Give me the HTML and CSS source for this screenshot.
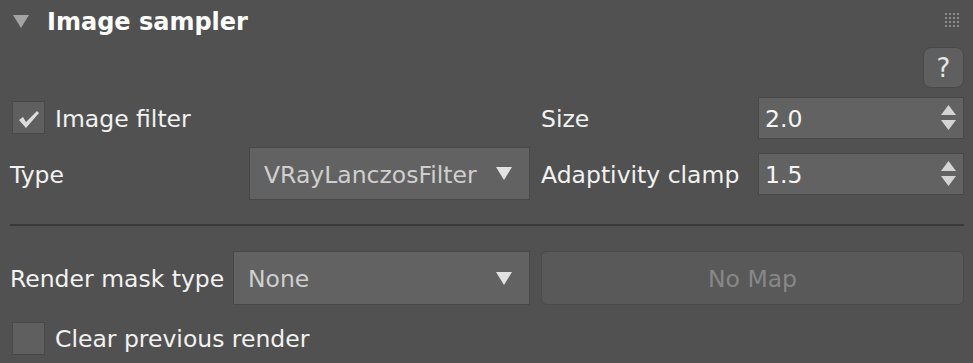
FILE: index.html
```html
<!DOCTYPE html>
<html lang="en">
<head>
    <meta charset="UTF-8">
    <title>Image sampler</title>
    <link rel="stylesheet" href="styles.css">
</head>
<body>
    <div class="rollout">
        <div class="rollout-head">
            <svg class="caret" width="16" height="13" viewBox="0 0 16 13"><polygon points="0,0 16,0 8,13" fill="#a3a3a3"/></svg>
            <span class="title">Image sampler</span>
            <svg class="grip" width="14" height="15" viewBox="0 0 14 15">
                <g fill="#8c8c8c">
                    <rect x="0" y="0" width="2" height="2"/><rect x="4" y="0" width="2" height="2"/><rect x="8" y="0" width="2" height="2"/><rect x="12" y="0" width="2" height="2"/>
                    <rect x="0" y="4" width="2" height="2"/><rect x="4" y="4" width="2" height="2"/><rect x="8" y="4" width="2" height="2"/><rect x="12" y="4" width="2" height="2"/>
                    <rect x="0" y="8" width="2" height="2"/><rect x="4" y="8" width="2" height="2"/><rect x="8" y="8" width="2" height="2"/><rect x="12" y="8" width="2" height="2"/>
                    <rect x="0" y="12" width="2" height="2"/><rect x="4" y="12" width="2" height="2"/><rect x="8" y="12" width="2" height="2"/><rect x="12" y="12" width="2" height="2"/>
                </g>
            </svg>
        </div>

        <div class="help-row">
            <button class="help">?</button>
        </div>

        <div class="row row-filter">
            <div class="half left">
                <span class="checkbox">
                    <svg width="22" height="20" viewBox="0 0 22 20"><path d="M1 11 L5 8 L8 13 L19 2 L21 4 L8 19 Z" fill="#dcdcdc"/></svg>
                </span>
                <span class="label check-label">Image filter</span>
            </div>
            <div class="half right">
                <span class="label">Size</span>
                <div class="spinner">
                    <span class="value">2.0</span>
                    <span class="arrows">
                        <svg width="15" height="25" viewBox="0 0 15 25"><polygon points="7.5,0 15,10 0,10" fill="#d4d4d4"/><polygon points="0,15 15,15 7.5,25" fill="#d4d4d4"/></svg>
                    </span>
                </div>
            </div>
        </div>

        <div class="row row-type">
            <div class="half left">
                <span class="label">Type</span>
                <div class="dropdown type-drop">
                    <span class="value">VRayLanczosFilter</span>
                    <svg width="16" height="13" viewBox="0 0 16 13"><polygon points="0,0 16,0 8,13" fill="#e2e2e2"/></svg>
                </div>
            </div>
            <div class="half right">
                <span class="label">Adaptivity clamp</span>
                <div class="spinner">
                    <span class="value">1.5</span>
                    <span class="arrows">
                        <svg width="15" height="25" viewBox="0 0 15 25"><polygon points="7.5,0 15,10 0,10" fill="#d4d4d4"/><polygon points="0,15 15,15 7.5,25" fill="#d4d4d4"/></svg>
                    </span>
                </div>
            </div>
        </div>

        <div class="separator"></div>

        <div class="row row-mask">
            <div class="half left">
                <span class="label">Render mask type</span>
                <div class="dropdown mask-drop">
                    <span class="value">None</span>
                    <svg width="16" height="13" viewBox="0 0 16 13"><polygon points="0,0 16,0 8,13" fill="#e2e2e2"/></svg>
                </div>
            </div>
            <div class="half right">
                <button class="map-btn">No Map</button>
            </div>
        </div>

        <div class="row row-clear">
            <div class="half left">
                <span class="checkbox"></span>
                <span class="label check-label">Clear previous render</span>
            </div>
        </div>
    </div>
</body>
</html>
```

FILE: styles.css
```css
body {
    margin: 0;
    background-color: #515151;
    color: #f2f2f2;
    font-family: "DejaVu Sans", Tahoma, sans-serif;
    font-size: 23.5px;
}

.rollout {
    padding: 0 9px 0 10px;
}

.rollout-head {
    display: flex;
    align-items: center;
    height: 45px;
}

.caret {
    margin-left: 3px;
    margin-top: -2px;
}

.title {
    font-weight: bold;
    font-size: 24px;
    margin-left: 18px;
    margin-top: -1px;
    color: #ffffff;
}

.grip {
    margin-left: auto;
    margin-right: 5px;
    margin-top: -4px;
}

.help-row {
    display: flex;
    justify-content: flex-end;
    margin-top: 2px;
}

.help {
    width: 41px;
    height: 41px;
    border: 1px solid #484848;
    border-radius: 8px;
    background-color: #5f5f5f;
    color: #e6e6e6;
    font-family: "DejaVu Sans", sans-serif;
    font-size: 26px;
    padding: 0;
}

.row {
    display: flex;
    column-gap: 11px;
}

.half {
    display: flex;
    align-items: center;
}

.half.left {
    width: 520px;
}

.half.right {
    width: 423px;
}

.row-filter {
    margin-top: 9px;
    height: 41px;
}

.row-type {
    margin-top: 9px;
    height: 53px;
}

.row-mask {
    margin-top: 25px;
    height: 54px;
}

.row-clear {
    margin-top: 15px;
    height: 36px;
}

.checkbox {
    box-sizing: border-box;
    width: 33px;
    height: 33px;
    margin-left: 2px;
    border: 1px solid #474747;
    background-color: #5f5f5f;
    display: flex;
    align-items: center;
    justify-content: center;
}

.checkbox svg {
    margin-top: 2px;
}

.check-label {
    margin-left: 10px;
}

.label {
    white-space: nowrap;
    padding-top: 2px;
}

.spinner,
.dropdown {
    box-sizing: border-box;
    display: flex;
    align-items: center;
    background-color: #626262;
    border: 1px solid #484848;
}

.spinner {
    margin-left: auto;
    width: 206px;
    height: 42px;
    padding: 0 7px 0 6px;
}

.spinner .value {
    color: #f6f6f6;
    padding-top: 2px;
}

.arrows {
    margin-left: auto;
    display: flex;
}

.dropdown {
    margin-left: auto;
    height: 100%;
    padding: 0 17px 0 14px;
    justify-content: space-between;
}

.dropdown .value {
    color: #cfcfcf;
    padding-top: 2px;
}

.type-drop {
    width: 281px;
}

.mask-drop {
    width: 297px;
}

.separator {
    height: 2px;
    background-color: #393939;
    margin-top: 24px;
}

.map-btn {
    width: 100%;
    height: 100%;
    border: 1px solid #4a4a4a;
    border-radius: 6px;
    background-color: #595959;
    color: #888888;
    font-family: "DejaVu Sans", sans-serif;
    font-size: 23.5px;
    padding-top: 2px;
}
```
